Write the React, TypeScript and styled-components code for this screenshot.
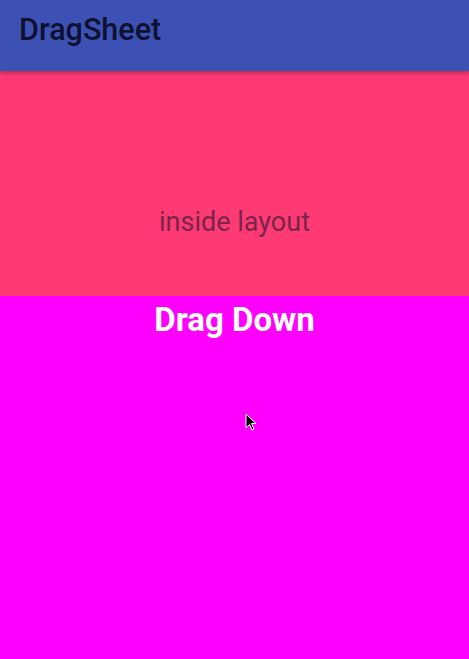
import React from "react";
import styled, { createGlobalStyle } from "styled-components";

const Global = createGlobalStyle`
  html, body { margin: 0; padding: 0; }
  body { width: 469px; height: 659px; overflow: hidden; font-family: Roboto, "Noto Sans", sans-serif; }
  #root { height: 100%; }
`;

const Page = styled.div`
  position: relative;
  display: flex;
  flex-direction: column;
  width: 469px;
  height: 659px;
  background: #ff00ff;
`;

const AppBar = styled.header`
  position: relative;
  z-index: 2;
  height: 71px;
  display: flex;
  align-items: center;
  padding: 0 19px;
  background: #3d51b5;
  box-shadow: 0 2px 4px rgba(0, 0, 0, 0.3);
`;

const Title = styled.h1`
  margin: 0;
  margin-top: -12px;
  font-family: Roboto, sans-serif;
  font-weight: 500;
  font-size: 30.5px;
  color: #0e1130;
`;

const Inside = styled.section`
  height: 225px;
  display: flex;
  align-items: center;
  justify-content: center;
  background: #fe3a75;
`;

const InsideText = styled.span`
  font-size: 27px;
  color: #7a2449;
  margin-top: 77px;
`;

const Sheet = styled.section`
  flex: 1;
  display: flex;
  flex-direction: column;
  align-items: center;
  background: #ff00ff;
`;

const SheetTitle = styled.div`
  font-weight: 700;
  font-size: 33px;
  color: #ffffff;
  line-height: 48px;
`;

const Cursor = styled.svg`
  position: absolute;
  left: 245px;
  top: 413px;
`;

export default function App() {
  return (
    <>
      <Global />
      <Page>
        <AppBar>
          <Title>DragSheet</Title>
        </AppBar>
        <Inside>
          <InsideText>inside layout</InsideText>
        </Inside>
        <Sheet>
          <SheetTitle>Drag Down</SheetTitle>
        </Sheet>
        <Cursor width="12" height="19" viewBox="0 0 12 19">
          <path d="M1 1 L1 15 L4.5 11.5 L7 17 L9 16 L6.5 10.5 L11 10.5 Z" fill="#000" stroke="#fff" strokeWidth="1" />
        </Cursor>
      </Page>
    </>
  );
}
